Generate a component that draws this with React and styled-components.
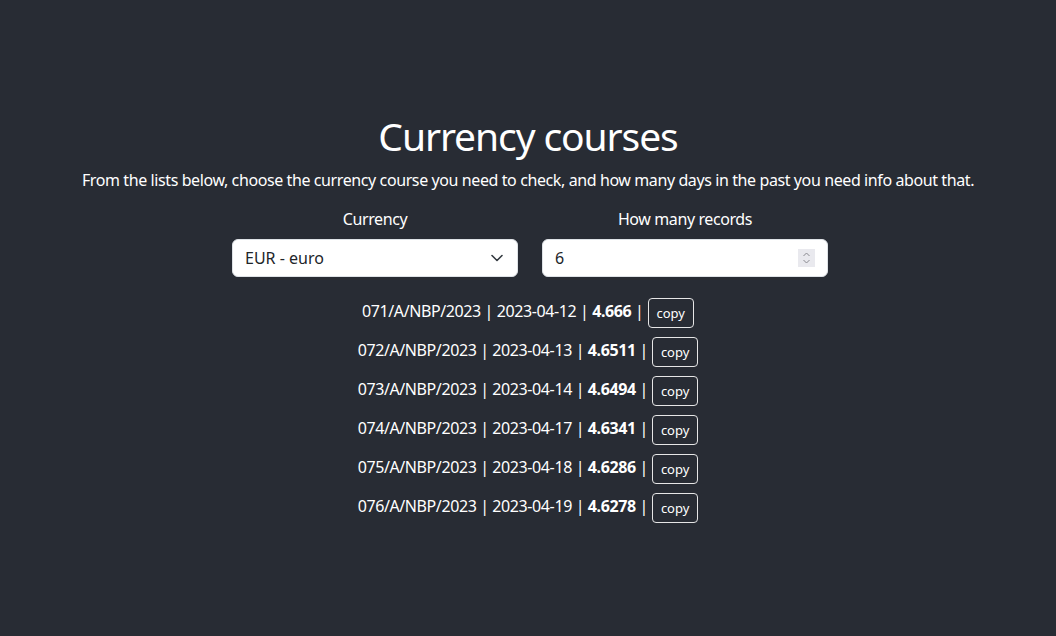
import React, { useState } from 'react';
import styled, { createGlobalStyle } from 'styled-components';

const Global = createGlobalStyle`
    html, body {
        margin: 0;
        padding: 0;
        background-color: #282c34;
    }
    body {
        font-family: "Segoe UI", "Noto Sans", "Liberation Sans", sans-serif;
        color: #fff;
        letter-spacing: -0.4px;
    }
    * { box-sizing: border-box; }
`;

const Page = styled.div`
    min-height: 636px;
    display: flex;
    flex-direction: column;
    align-items: center;
    padding-top: 112px;
`;

const Title = styled.h1`
    margin: 0;
    font-size: 39px;
    font-weight: 400;
    line-height: 48px;
    letter-spacing: -1.1px;
`;

const Lead = styled.p`
    margin: 8px 0 0;
    font-size: 16px;
    line-height: 24px;
`;

const Controls = styled.div`
    display: flex;
    gap: 24px;
    margin-top: 15px;
    padding-left: 4px;
`;

const Field = styled.label`
    width: 286px;
    display: flex;
    flex-direction: column;
    align-items: center;
    gap: 8px;
    font-size: 16px;
    line-height: 24px;
`;

const Box = styled.div`
    position: relative;
    width: 100%;
    height: 38px;
    background: #fff;
    border: 1px solid #dee2e6;
    border-radius: 6px;
    color: #212529;
    display: flex;
    align-items: center;
    padding: 0 12px;
    font-size: 16px;
    letter-spacing: 0;
`;

const Chevron = styled.svg`
    position: absolute;
    right: 14px;
    top: 13px;
`;

const Spinner = styled.span`
    position: absolute;
    right: 12px;
    top: 9px;
    width: 17px;
    height: 18px;
    background: #e9e9ee;
    display: flex;
    align-items: center;
    justify-content: center;
`;

const List = styled.div`
    margin-top: 14px;
    display: flex;
    flex-direction: column;
    align-items: center;
`;

const Row = styled.div`
    height: 39px;
    display: flex;
    align-items: center;
    font-size: 16px;
    gap: 4px;
    b { font-weight: 700; }
`;

const CopyButton = styled.button`
    height: 30px;
    padding: 0 8px;
    background: transparent;
    color: #fff;
    border: 1px solid #e6e6e6;
    border-radius: 4px;
    font-family: inherit;
    font-size: 13px;
    letter-spacing: 0;
    margin-top: 4px;
`;

const records = [
    ['071/A/NBP/2023', '2023-04-12', '4.666'],
    ['072/A/NBP/2023', '2023-04-13', '4.6511'],
    ['073/A/NBP/2023', '2023-04-14', '4.6494'],
    ['074/A/NBP/2023', '2023-04-17', '4.6341'],
    ['075/A/NBP/2023', '2023-04-18', '4.6286'],
    ['076/A/NBP/2023', '2023-04-19', '4.6278'],
];

export default function App() {
    const [count] = useState(6);
    return (
        <Page>
            <Global />
            <Title>Currency courses</Title>
            <Lead>From the lists below, choose the currency course you need to check, and how many days in the past you need info about that.</Lead>
            <Controls>
                <Field>
                    Currency
                    <Box>
                        EUR - euro
                        <Chevron width="12" height="10" viewBox="0 0 12 10">
                            <path d="M1 2.5l5 5 5-5" fill="none" stroke="#343a40" strokeWidth="1.6" strokeLinecap="round" strokeLinejoin="round" />
                        </Chevron>
                    </Box>
                </Field>
                <Field>
                    How many records
                    <Box>
                        {count}
                        <Spinner>
                            <svg width="9" height="14" viewBox="0 0 9 14">
                                <path d="M1.5 5l3-3 3 3M1.5 9l3 3 3-3" fill="none" stroke="#8a8a90" strokeWidth="1" />
                            </svg>
                        </Spinner>
                    </Box>
                </Field>
            </Controls>
            <List>
                {records.map(([no, date, rate]) => (
                    <Row key={no}>
                        <span>{no} | {date} | <b>{rate}</b> |</span>
                        <CopyButton>copy</CopyButton>
                    </Row>
                ))}
            </List>
        </Page>
    );
}
